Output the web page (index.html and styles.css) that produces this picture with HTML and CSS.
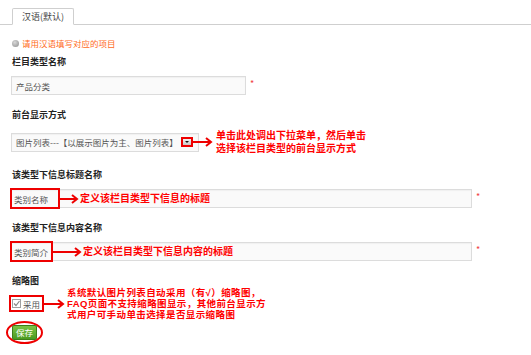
FILE: index.html
```html
<!DOCTYPE html>
<html lang="zh-CN">
  <head>
    <meta charset="UTF-8" />
    <meta name="viewport" content="width=device-width, initial-scale=1.0" />
    <title>栏目类型</title>
    <link rel="stylesheet" href="styles.css">
  </head>
  <body>
    <div class="panel">
      <div class="tabs">
        <span class="tab">汉语(默认)</span>
      </div>

      <div class="form">
        <p class="hint"><i class="hint-icon"></i>请用汉语填写对应的项目</p>

        <div class="group">
          <div class="label">栏目类型名称</div>
          <div class="row">
            <div class="input w-short">产品分类</div>
            <span class="req">*</span>
          </div>
        </div>

        <div class="group">
          <div class="label">前台显示方式</div>
          <div class="row">
            <div class="select">
              <span>图片列表---【以展示图片为主、图片列表】</span>
              <span class="drop-mark"><i class="drop-btn"></i></span>
            </div>
            <svg class="arrow arrow-over" width="20" height="10" viewBox="0 0 20 10">
              <line x1="0" y1="5" x2="18" y2="5" />
              <polyline points="13,1 18,5 13,9" />
            </svg>
            <span class="note">单击此处调出下拉菜单，然后单击<br>选择该栏目类型的前台显示方式</span>
          </div>
        </div>

        <div class="group">
          <div class="label">该类型下信息标题名称</div>
          <div class="row">
            <div class="input input-marked w-long">
              <span class="mark mark-wide">类别名称</span>
              <svg class="arrow" width="19" height="10" viewBox="0 0 19 10">
                <line x1="0" y1="5" x2="17" y2="5" />
                <polyline points="12,1 17,5 12,9" />
              </svg>
              <span class="note">定义该栏目类型下信息的标题</span>
            </div>
            <span class="req">*</span>
          </div>
        </div>

        <div class="group">
          <div class="label">该类型下信息内容名称</div>
          <div class="row">
            <div class="input input-marked w-long">
              <span class="mark mark-tight">类别简介</span>
              <svg class="arrow" width="29" height="10" viewBox="0 0 29 10">
                <line x1="0" y1="5" x2="27" y2="5" />
                <polyline points="22,1 27,5 22,9" />
              </svg>
              <span class="note">定义该栏目类型下信息内容的标题</span>
            </div>
            <span class="req">*</span>
          </div>
        </div>

        <div class="group">
          <div class="label">缩略图</div>
          <div class="row row-check">
            <span class="mark-check">
              <i class="checkbox">
                <svg width="7" height="7" viewBox="0 0 7 7"><polyline points="1,3.5 3,5.5 6.5,1" /></svg>
              </i>
              采用
            </span>
            <svg class="arrow" width="21" height="10" viewBox="0 0 21 10">
              <line x1="0" y1="5" x2="19" y2="5" />
              <polyline points="14,1 19,5 14,9" />
            </svg>
            <span class="note note-small">系统默认图片列表自动采用（有√）缩略图，<br>FAQ页面不支持缩略图显示，其他前台显示方<br>式用户可手动单击选择是否显示缩略图</span>
          </div>
        </div>

        <div class="save-ring">
          <button type="submit" class="btn">保存</button>
        </div>
      </div>
    </div>
  </body>
</html>
```

FILE: styles.css
```css
body {
  margin: 0;
  background: #ffffff;
  font-family: "Noto Sans CJK SC", "Noto Sans", sans-serif;
  color: #333;
}

.panel {
  border-bottom: 1px solid #cfcfcf;
}

.tabs {
  box-sizing: border-box;
  height: 25px;
  padding: 8px 0 0 12px;
  border-bottom: 1px solid #cfcfcf;
  display: flex;
  align-items: flex-end;
}

.tab {
  box-sizing: border-box;
  height: 17px;
  margin-bottom: -1px;
  padding: 0 9px;
  background: #fff;
  border: 1px solid #cfcfcf;
  border-bottom-color: #fff;
  border-radius: 2px 2px 0 0;
  font-size: 9px;
  line-height: 15px;
  color: #444;
}

.form {
  padding: 0 12px 15px;
}

.hint {
  margin: 11px 0 5px;
  height: 14px;
  display: flex;
  align-items: center;
  font-size: 8.5px;
  color: #ff6a1a;
}

.hint-icon {
  width: 7px;
  height: 7px;
  margin-right: 3px;
  border-radius: 50%;
  background: radial-gradient(circle at 40% 35%, #d8d8d8, #8d8d8d);
}

.group + .group {
  margin-top: 13px;
}

.label {
  height: 14px;
  line-height: 14px;
  margin-bottom: 7px;
  font-size: 9px;
  font-weight: bold;
  color: #222;
}

.row {
  display: flex;
  align-items: center;
  margin-left: -1px;
}

.input,
.select {
  box-sizing: border-box;
  height: 19px;
  padding-left: 4px;
  display: flex;
  align-items: center;
  background: #fafafa;
  border: 1px solid #dcdcdc;
  box-shadow: inset 0 1px 1px rgba(0, 0, 0, 0.04);
  font-size: 8.5px;
  color: #555;
  white-space: nowrap;
}

.w-short {
  width: 235px;
}

.w-long {
  width: 461px;
}

.input-marked {
  padding-left: 0;
}

.req {
  margin-left: 4px;
  margin-top: -4px;
  font-size: 9px;
  color: #f04040;
}

.select {
  width: 188px;
  padding-right: 5px;
  justify-content: space-between;
}

.drop-mark {
  box-sizing: border-box;
  width: 12px;
  height: 10px;
  border: 2px solid #ee0000;
  display: flex;
}

.drop-btn {
  flex: 1;
  position: relative;
  background: linear-gradient(#f2f2f2, #c8c8c8);
}

.drop-btn::after {
  content: "";
  position: absolute;
  left: 2px;
  top: 2px;
  border-left: 2px solid transparent;
  border-right: 2px solid transparent;
  border-top: 2px solid #111;
}

.arrow {
  flex: none;
  fill: none;
  stroke: #ee0000;
  stroke-width: 2;
}

.arrow-over {
  margin-left: -6px;
}

.note {
  margin-left: 3px;
  font-family: "Liberation Sans", "Noto Sans CJK SC", sans-serif;
  font-size: 10px;
  line-height: 13px;
  font-weight: bold;
  color: #ff0000;
  white-space: nowrap;
}

.mark {
  box-sizing: border-box;
  height: 21px;
  margin: -1px 0 -1px -2px;
  border: 2px solid #ee0000;
  display: flex;
  align-items: center;
  flex: none;
}

.mark-wide {
  padding: 0 10px 0 2px;
}

.mark-tight {
  padding: 0 3px 0 2px;
}

.mark + .arrow + .note {
  margin-left: 1px;
}

.row-check {
  height: 17px;
  margin-left: -3px;
}

.mark-check {
  box-sizing: border-box;
  height: 17px;
  padding: 0 2px 0 1px;
  border: 2px solid #ee0000;
  display: flex;
  align-items: center;
  gap: 2px;
  font-size: 8.5px;
  color: #555;
}

.checkbox {
  box-sizing: border-box;
  width: 9px;
  height: 9px;
  border: 1px solid #a0a0a0;
  background: #fff;
  display: flex;
  align-items: center;
  justify-content: center;
}

.checkbox svg {
  fill: none;
  stroke: #888;
  stroke-width: 1.2;
}

.note-small {
  margin-left: 2px;
  font-size: 9.5px;
  line-height: 11px;
  letter-spacing: 0.4px;
}

.save-ring {
  box-sizing: border-box;
  width: 37px;
  height: 23px;
  margin: 9px 0 0 -6px;
  border: 2px solid #ee0000;
  border-radius: 50%;
  display: flex;
  align-items: center;
  justify-content: center;
}

.btn {
  box-sizing: border-box;
  width: 25px;
  height: 15px;
  padding: 0;
  border: 1px solid #3d7d18;
  border-radius: 2px;
  background: linear-gradient(#7cc445, #4a9a20);
  font-family: inherit;
  font-size: 8.5px;
  line-height: 13px;
  color: #fff;
}
```
